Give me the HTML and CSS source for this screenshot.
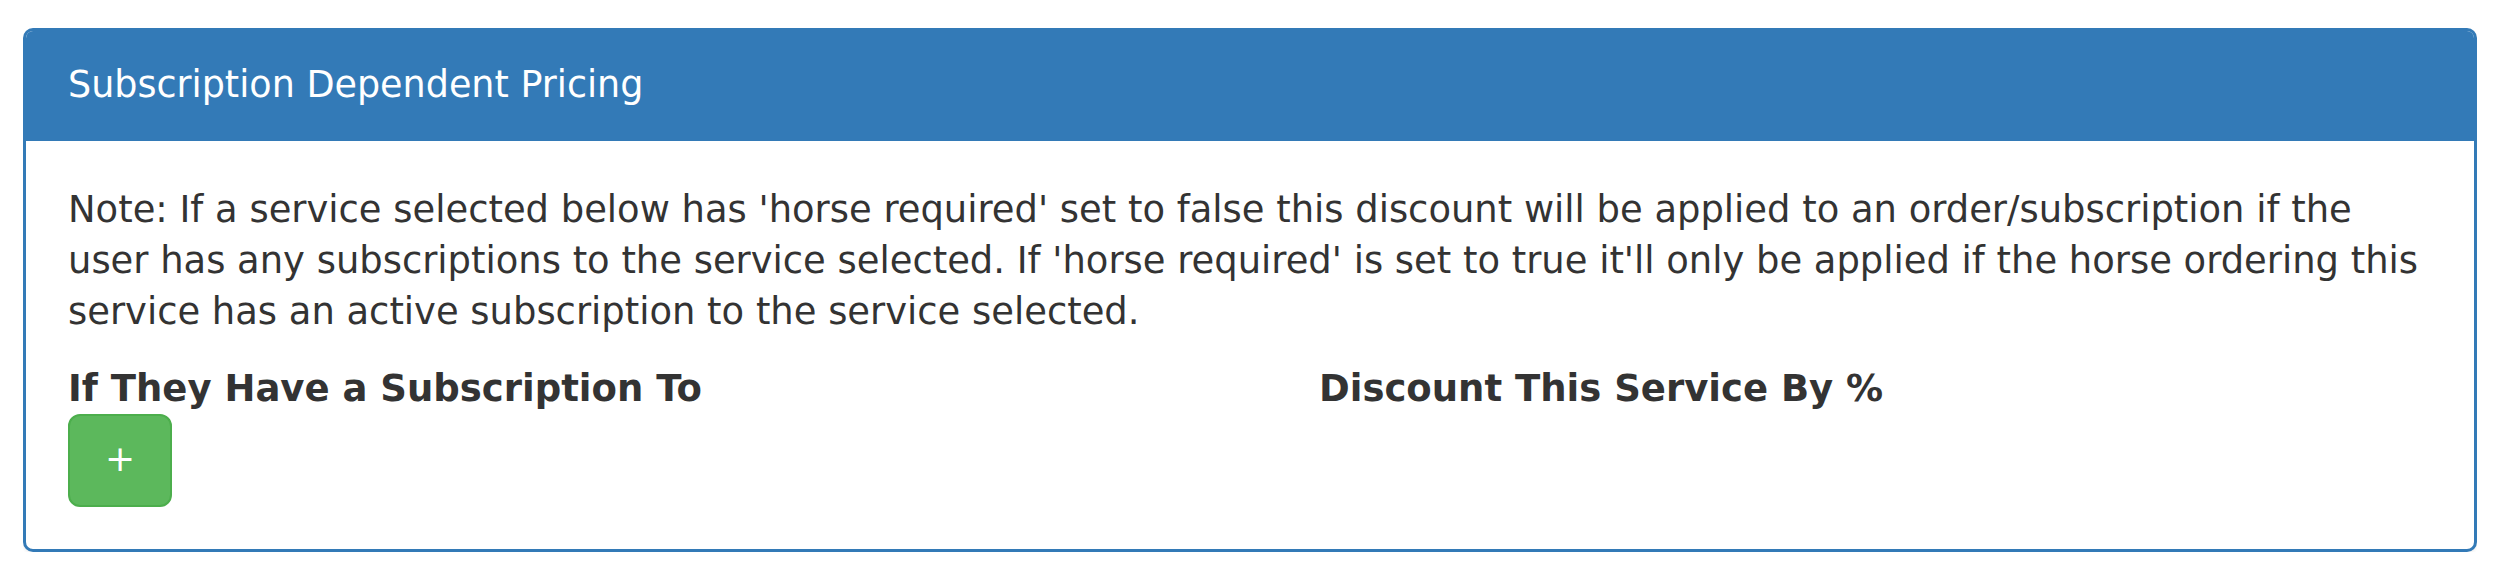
FILE: index.html
```html
<!DOCTYPE html>
<html lang="en">
<head>
    <meta charset="UTF-8">
    <meta name="viewport" content="width=device-width, initial-scale=1.0">
    <title>Subscription Dependent Pricing</title>
    <link rel="stylesheet" href="styles.css">
</head>
<body>
    <div class="panel">
        <div class="panel-heading">
            <h3 class="panel-title">Subscription Dependent Pricing</h3>
        </div>
        <div class="panel-body">
            <p class="note">Note: If a service selected below has 'horse required' set to false this discount will be applied to an order/subscription if the<br>
                user has any subscriptions to the service selected. If 'horse required' is set to true it'll only be applied if the horse ordering this<br>
                service has an active subscription to the service selected.</p>
            <div class="pricing-row">
                <div class="pricing-col">
                    <h4>If They Have a Subscription To</h4>
                    <button class="btn-add" type="button">+</button>
                </div>
                <div class="pricing-col">
                    <h4>Discount This Service By %</h4>
                </div>
            </div>
        </div>
    </div>
</body>
</html>
```

FILE: styles.css
```css
body {
    margin: 28px 23px;
    font-family: "DejaVu Sans", Verdana, sans-serif;
    color: #333;
    background: #fff;
}

.panel {
    border: 3px solid #337ab7;
    border-radius: 10px;
    box-shadow: 0 2px 3px rgba(0, 0, 0, 0.06);
    background: #fff;
}

.panel-heading {
    background: #337ab7;
    color: #fff;
    padding: 34px 42px 36px;
    border-radius: 7px 7px 0 0;
}

.panel-title {
    margin: 0;
    font-size: 36.5px;
    font-weight: normal;
    line-height: 40px;
}

.panel-body {
    padding: 42px;
}

.note {
    margin: 0 0 32px;
    padding-top: 1px;
    font-size: 36.9px;
    line-height: 51px;
    white-space: nowrap;
}

.pricing-row {
    display: grid;
    grid-template-columns: 1251px 1fr;
}

.pricing-col h4 {
    margin: 0 0 5px;
    font-size: 37px;
    line-height: 40px;
    font-weight: bold;
}

.btn-add {
    display: block;
    width: 104px;
    height: 93px;
    padding: 0 0 4px;
    background: #5cb85c;
    border: 2px solid #4cae4c;
    border-radius: 12px;
    color: #fff;
    font-family: "DejaVu Sans", sans-serif;
    font-size: 36px;
    line-height: 1;
}
```
